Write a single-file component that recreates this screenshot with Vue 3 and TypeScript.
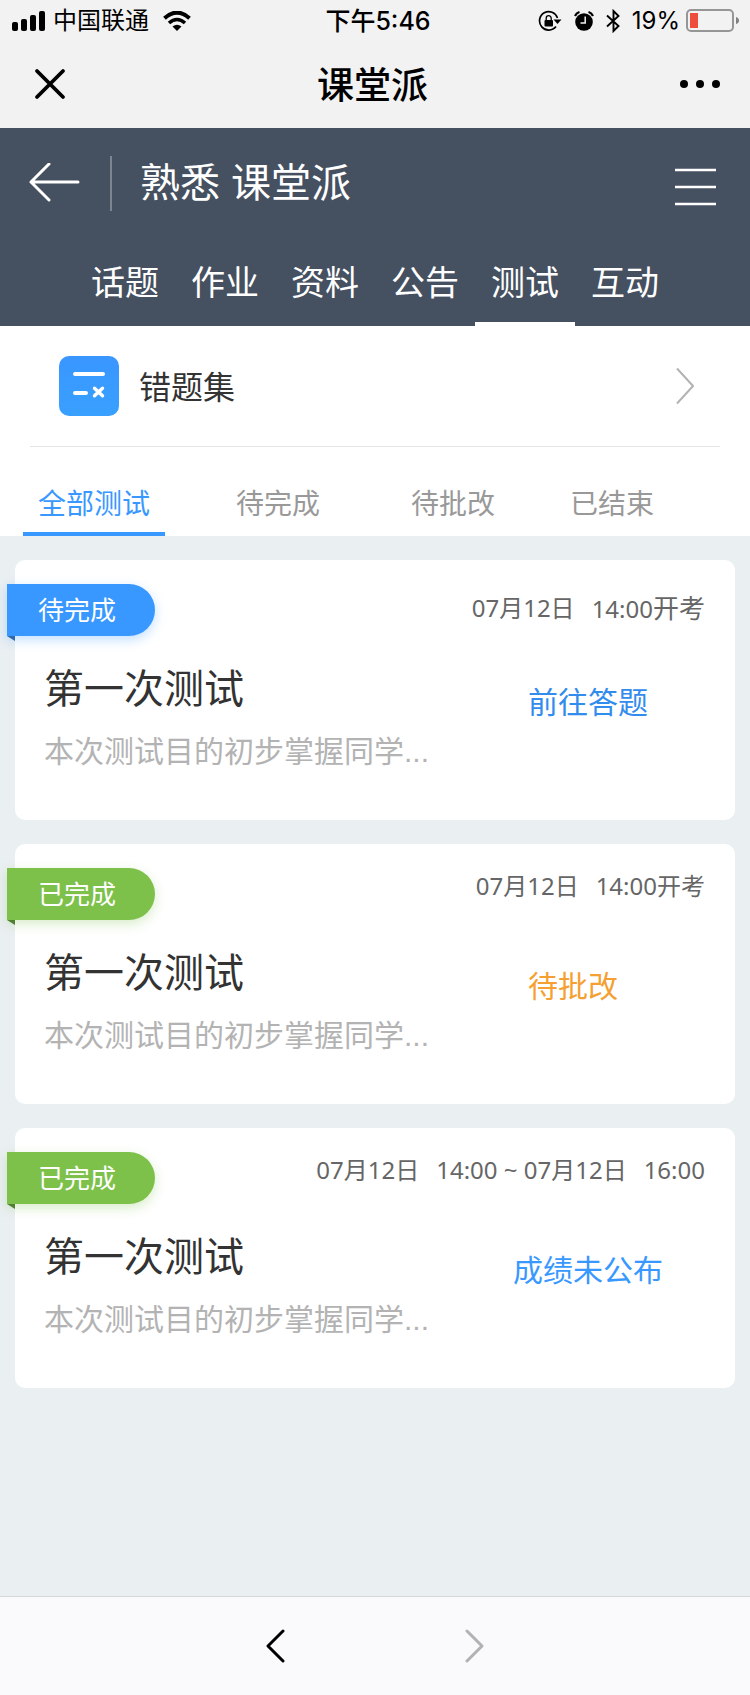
<script setup lang="ts">
import { ref } from 'vue'

interface Exam {
  status: string
  tone: 'blue' | 'green'
  times: string[]
  suffix: string
  title: string
  desc: string
  action: string
  actionTone: 'deep' | 'orange' | 'blue'
}

const sections: string[] = ['话题', '作业', '资料', '公告', '测试', '互动']
const section = ref('测试')

const filters: string[] = ['全部测试', '待完成', '待批改', '已结束']
const filter = ref('全部测试')

const exams: Exam[] = [
  { status: '待完成', tone: 'blue', times: ['07月12日', '14:00'], suffix: '开考', title: '第一次测试', desc: '本次测试目的初步掌握同学...', action: '前往答题', actionTone: 'deep' },
  { status: '已完成', tone: 'green', times: ['07月12日', '14:00'], suffix: '开考', title: '第一次测试', desc: '本次测试目的初步掌握同学...', action: '待批改', actionTone: 'orange' },
  { status: '已完成', tone: 'green', times: ['07月12日', '14:00 ~ 07月12日', '16:00'], suffix: '', title: '第一次测试', desc: '本次测试目的初步掌握同学...', action: '成绩未公布', actionTone: 'blue' },
]
</script>

<template>
  <div class="page">
    <div class="status">
      <div class="status-left">
        <svg width="34" height="20" viewBox="0 0 34 20" aria-hidden="true">
          <rect x="0" y="11" width="6" height="9" rx="2" />
          <rect x="9" y="8" width="6" height="12" rx="2" />
          <rect x="18" y="4" width="6" height="16" rx="2" />
          <rect x="27" y="0" width="6" height="20" rx="2" />
        </svg>
        <span class="carrier">中国联通</span>
        <svg width="28" height="20" viewBox="0 0 28 20" aria-hidden="true">
          <path d="M1.5 7.2Q14-4 26.5 7.2" fill="none" stroke="#000" stroke-width="4" />
          <path d="M6 12Q14 5 22 12" fill="none" stroke="#000" stroke-width="3.6" />
          <path d="M9.5 15.5Q14 12 18.5 15.5L14 20Z" />
        </svg>
      </div>
      <span class="clock">下午5:46</span>
      <div class="status-right">
        <svg width="24" height="22" viewBox="0 0 24 22" aria-hidden="true">
          <path d="M19.5 8A9.2 9.2 0 1 0 18 16.5" fill="none" stroke="#000" stroke-width="1.7" />
          <path d="M15.5 9.5H23.5L19.5 14Z" />
          <rect x="6.5" y="10" width="8.5" height="6.5" rx="1" />
          <path d="M8.2 10.5V8.2a2.5 2.5 0 0 1 5 0V10.5" fill="none" stroke="#000" stroke-width="1.3" />
        </svg>
        <svg class="alarm" width="20" height="20" viewBox="0 0 20 20" aria-hidden="true">
          <circle cx="10" cy="11" r="8.8" />
          <path d="M1 5A7 7 0 0 1 5.5 1M14.5 1A7 7 0 0 1 19 5" fill="none" stroke="#000" stroke-width="2.2" />
          <path d="M11.2 5.5V12H6.5" fill="none" stroke="#f2f2f2" stroke-width="1.5" />
        </svg>
        <svg class="bluetooth" width="14" height="24" viewBox="0 0 14 24" aria-hidden="true">
          <path d="M1 6.5L12.5 17L7.5 22V2L12.5 7L1 17.5" fill="none" stroke="#000" stroke-width="1.9" />
        </svg>
        <span class="percent">19%</span>
        <svg width="54" height="24" viewBox="0 0 54 24" aria-hidden="true">
          <rect x="1" y="1" width="46" height="21" rx="4" fill="none" stroke="#969696" stroke-width="2" />
          <rect x="4" y="4" width="8" height="15" fill="#ee4d3d" />
          <path d="M50 8Q53 9 53 11.5Q53 14 50 15Z" fill="#808080" />
        </svg>
      </div>
    </div>

    <div class="wechat">
      <button type="button" class="icon-btn" aria-label="关闭">
        <svg width="32" height="32" viewBox="0 0 32 32"><path d="M3 3L29 29M29 3L3 29" fill="none" stroke="#000" stroke-width="3.8" stroke-linecap="round" /></svg>
      </button>
      <strong class="app-name">课堂派</strong>
      <button type="button" class="icon-btn" aria-label="更多">
        <svg width="42" height="10" viewBox="0 0 42 10"><circle cx="5" cy="5" r="4" /><circle cx="21" cy="5" r="4" /><circle cx="37" cy="5" r="4" /></svg>
      </button>
    </div>

    <header class="header">
      <div class="course">
        <button type="button" class="icon-btn" aria-label="返回">
          <svg width="52" height="40" viewBox="0 0 52 40"><path d="M21 1L3 19L21 37M3 19H50" fill="none" stroke="#fff" stroke-width="3" stroke-linecap="round" stroke-linejoin="round" /></svg>
        </button>
        <i class="divider"></i>
        <h1 class="course-name">熟悉 课堂派</h1>
        <button type="button" class="icon-btn menu" aria-label="菜单">
          <svg width="42" height="38" viewBox="0 0 42 38"><path d="M1 2H42M1 19H42M1 36H42" fill="none" stroke="#fff" stroke-width="2.6" /></svg>
        </button>
      </div>
      <nav class="sections">
        <button v-for="s in sections" :key="s" type="button" class="section" :class="{ on: s === section }" @click="section = s">{{ s }}</button>
      </nav>
    </header>

    <div class="top">
      <a class="mistakes" href="#mistakes">
        <svg width="60" height="60" viewBox="0 0 60 60" aria-hidden="true">
          <defs>
            <linearGradient id="tile" x1="0" y1="0" x2="0" y2="1">
              <stop offset="0" stop-color="#3996ff" />
              <stop offset="1" stop-color="#39a0ff" />
            </linearGradient>
          </defs>
          <rect width="60" height="60" rx="10" fill="url(#tile)" />
          <path d="M16 18H44M16 37H27" fill="none" stroke="#fff" stroke-width="4" stroke-linecap="round" />
          <path d="M35.5 32.2L43.5 39.8M43.5 32.2L35.5 39.8" fill="none" stroke="#fff" stroke-width="3.4" stroke-linecap="round" />
        </svg>
        <span class="mistakes-text">错题集</span>
        <svg width="18" height="38" viewBox="0 0 18 38" aria-hidden="true"><path d="M1 1.5L17 19L1 36.5" fill="none" stroke="#b3b3b3" stroke-width="2" /></svg>
      </a>
      <div class="filters">
        <button v-for="f in filters" :key="f" type="button" class="filter" :class="{ on: f === filter }" @click="filter = f">{{ f }}</button>
      </div>
    </div>

    <main class="list">
      <article v-for="(e, i) in exams" :key="i" class="card">
        <span class="ribbon" :class="e.tone">{{ e.status }}</span>
        <div class="time" :class="{ upcoming: e.tone === 'blue' }">
          <span v-for="(t, n) in e.times" :key="n">{{ t }}<span v-if="e.suffix && n === e.times.length - 1" class="suffix">{{ e.suffix }}</span></span>
        </div>
        <div class="body">
          <div class="words">
            <h2 class="title">{{ e.title }}</h2>
            <p class="desc">{{ e.desc }}</p>
          </div>
          <div class="action-col">
            <a href="#exam" class="action" :class="[e.actionTone]">{{ e.action }}</a>
          </div>
        </div>
      </article>
    </main>

    <footer class="toolbar">
      <button type="button" class="icon-btn" aria-label="后退">
        <svg width="20" height="36" viewBox="0 0 20 36"><path d="M17 3L2 18L17 33" fill="none" stroke="#000" stroke-width="3" stroke-linecap="round" stroke-linejoin="round" /></svg>
      </button>
      <button type="button" class="icon-btn" aria-label="前进">
        <svg width="20" height="36" viewBox="0 0 20 36"><path d="M3 3L18 18L3 33" fill="none" stroke="#b2b2b2" stroke-width="3" stroke-linecap="round" stroke-linejoin="round" /></svg>
      </button>
    </footer>
  </div>
</template>

<style>
body {
  margin: 0;
}
</style>

<style scoped>
.page {
  min-height: 100vh;
  display: flex;
  flex-direction: column;
  background: #eaeff2;
  color: #333;
  font-family: "Liberation Sans", "Noto Sans CJK SC", sans-serif;
}
button {
  font: inherit;
  border: 0;
  padding: 0;
  background: none;
  cursor: pointer;
}
a {
  text-decoration: none;
}
svg {
  display: block;
  flex: none;
}
.icon-btn {
  display: flex;
}
.status {
  display: grid;
  grid-template-columns: 1fr auto 1fr;
  align-items: center;
  height: 40px;
  padding: 0 10px 0 12px;
  background: #f2f2f2;
  color: #000;
  font-size: 24px;
  line-height: 42px;
}
.status-left,
.status-right {
  display: flex;
  align-items: center;
  height: 40px;
}
.status-left svg:last-child {
  margin-left: 14px;
}
.carrier {
  margin-left: 7px;
}
.clock {
  padding-left: 4px;
  font-family: Inter, "Noto Sans CJK SC", sans-serif;
  font-size: 25px;
  font-weight: 500;
}
.status-right {
  justify-content: flex-end;
  font-family: Inter, "Noto Sans CJK SC", sans-serif;
}
.alarm {
  margin-left: 12px;
}
.bluetooth {
  margin-left: 12px;
}
.percent {
  margin: 0 6px 0 12px;
}
.wechat {
  display: flex;
  align-items: center;
  justify-content: space-between;
  height: 88px;
  padding: 0 29px 0 34px;
  background: #f2f2f2;
}
.app-name {
  padding-top: 6px;
  color: #000;
  font-size: 37px;
  font-weight: 500;
  line-height: 52px;
}
.header {
  background: #455060;
  color: #fff;
}
.course {
  display: flex;
  align-items: center;
  height: 110px;
  padding: 0 34px 0 28px;
}
.divider {
  width: 2px;
  height: 55px;
  margin: 0 28px 0 30px;
  background: #7d8590;
}
.course-name {
  flex: 1;
  margin: 0;
  padding-bottom: 6px;
  font-size: 40px;
  font-weight: 400;
}
.menu {
  padding-top: 8px;
}
.sections {
  display: flex;
  justify-content: center;
}
.section {
  width: 100px;
  height: 88px;
  border-bottom: 4px solid transparent;
  color: #fff;
  font-size: 34px;
}
.section.on {
  border-bottom-color: #fff;
}
.top {
  background: #fff;
}
.mistakes {
  display: flex;
  align-items: center;
  height: 120px;
  margin: 0 30px;
  padding: 0 26px 0 29px;
  border-bottom: 1px solid #e5e5e5;
  color: #333;
}
.mistakes-text {
  flex: 1;
  margin-left: 20px;
  padding-bottom: 2px;
  font-size: 32px;
}
.filters {
  display: grid;
  grid-template-columns: 142fr 226fr 124fr 194fr;
  justify-items: center;
  padding: 20px 41px 0 23px;
}
.filter {
  height: 69px;
  padding: 4px 15px 0;
  border-bottom: 4px solid transparent;
  color: #999;
  font-size: 28px;
}
.filter.on {
  border-bottom-color: #3898ff;
  color: #3898ff;
}
.list {
  flex: 1;
  display: flex;
  flex-direction: column;
  gap: 24px;
  padding: 24px 15px;
}
.card {
  position: relative;
  box-sizing: border-box;
  min-height: 260px;
  padding-top: 24px;
  border-radius: 10px;
  background: #fff;
}
.ribbon {
  position: absolute;
  left: -8px;
  top: 24px;
  box-sizing: border-box;
  width: 148px;
  padding: 2px 0 0 31px;
  border-radius: 0 26px 26px 0;
  color: #fff;
  font-size: 26px;
  line-height: 50px;
}
.ribbon::after {
  content: "";
  position: absolute;
  left: 0;
  top: 100%;
  width: 8px;
  height: 5px;
  clip-path: polygon(0 0, 100% 0, 100% 100%);
}
.ribbon.blue {
  background: #3898ff;
  box-shadow: 0 4px 12px rgba(56, 152, 255, 0.3);
}
.ribbon.blue::after {
  background: #2c69ad;
}
.ribbon.green {
  background: #7dc14b;
  box-shadow: 0 4px 12px rgba(125, 193, 75, 0.3);
}
.ribbon.green::after {
  background: #4f8030;
}
.time {
  display: flex;
  justify-content: flex-end;
  gap: 17px;
  height: 76px;
  padding-right: 30px;
  color: #666;
  font-family: "Noto Sans", "Noto Sans CJK SC", sans-serif;
  font-size: 24px;
  line-height: 36px;
}
.time.upcoming {
  line-height: 48px;
}
.time.upcoming .suffix {
  font-size: 26px;
}
.body {
  display: flex;
  justify-content: space-between;
  padding-left: 29px;
}
.title {
  margin: 0;
  font-size: 40px;
  font-weight: 400;
  line-height: 58px;
}
.desc {
  margin: 10px 0 0;
  color: #b3b3b3;
  font-size: 30px;
  line-height: 48px;
}
.action-col {
  width: 294px;
  padding-top: 21px;
  text-align: center;
}
.action {
  display: inline-block;
  min-width: 120px;
  font-size: 30px;
  line-height: 44px;
  text-align: left;
}
.action.deep {
  color: #328cee;
}
.action.orange {
  color: #f5a032;
}
.action.blue {
  color: #3898ff;
}
.toolbar {
  display: flex;
  align-items: center;
  justify-content: center;
  gap: 178px;
  height: 98px;
  border-top: 1px solid #d3d7da;
  background: #fafafc;
}
</style>
